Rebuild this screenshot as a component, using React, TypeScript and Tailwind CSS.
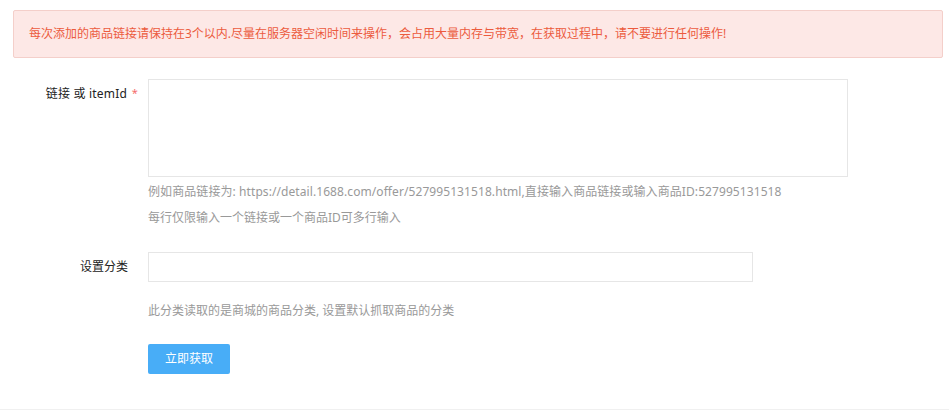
import { useState } from "react";

const font = {
  fontFamily: '"Noto Sans", "Noto Sans CJK SC", sans-serif',
};

export default function App() {
  const [links, setLinks] = useState("");
  const [category, setCategory] = useState("");

  return (
    <div className="min-h-[410px] bg-white text-[12px]" style={font}>
      <div className="border-b border-[#f0f0f0] pb-[35px]">
        <div className="ml-[13px] mr-[6px] pt-[10px]">
          <div className="flex h-[48px] items-center rounded-[2px] border border-[#f4cfca] bg-[#fde8e6] pl-[15px] text-[#ec5b3e]">
            每次添加的商品链接请保持在3个以内.尽量在服务器空闲时间来操作，会占用大量内存与带宽，在获取过程中，请不要进行任何操作!
          </div>
        </div>

        {/* links */}
        <div className="mt-[21px] flex">
          <label className="relative h-[30px] w-[127px] shrink-0 text-right leading-[30px] tracking-[0.2px] text-[#222]">
            链接 或 itemId
            <span className="absolute right-[-11px] top-[-1px] text-[11px] text-[#f56c6c]">*</span>
          </label>
          <div className="ml-[21px]">
            <textarea
              value={links}
              onChange={(e) => setLinks(e.target.value)}
              className="block h-[98px] w-[700px] resize-none border border-[#e6e6e6] bg-white p-2 outline-none"
            />
            <div className="mt-[5px] leading-[20px] tracking-[0.08px] text-[#999]">
              例如商品链接为: https://detail.1688.com/offer/527995131518.html,直接输入商品链接或输入商品ID:527995131518
            </div>
            <div className="mt-[6px] leading-[20px] text-[#999]">每行仅限输入一个链接或一个商品ID可多行输入</div>
          </div>
        </div>

        {/* category */}
        <div className="mt-[24px] flex">
          <label className="h-[30px] w-[128px] shrink-0 text-right leading-[30px] text-[#222]">设置分类</label>
          <div className="ml-[20px]">
            <input
              value={category}
              onChange={(e) => setCategory(e.target.value)}
              className="block h-[30px] w-[605px] border border-[#e6e6e6] bg-white px-2 outline-none"
            />
            <div className="mt-[19px] leading-[20px] text-[#999]">此分类读取的是商城的商品分类, 设置默认抓取商品的分类</div>
            <button className="mt-[23px] h-[30px] w-[82px] rounded-[2px] bg-[#48adf7] text-[12px] text-white">
              立即获取
            </button>
          </div>
        </div>
      </div>
    </div>
  );
}
